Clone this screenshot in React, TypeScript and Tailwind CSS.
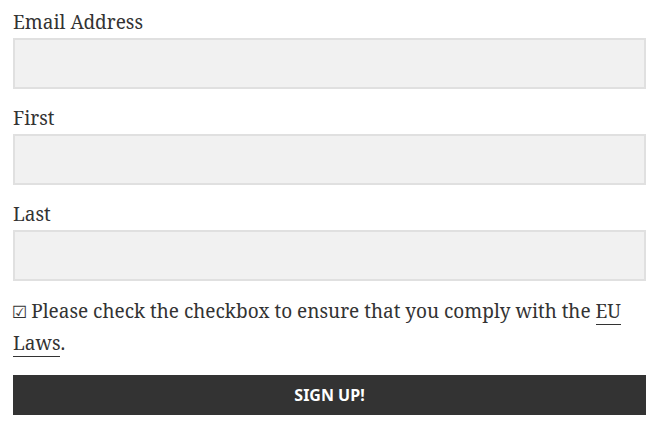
import React from 'react';

const serif = 'font-["Noto_Serif","DejaVu_Serif","Liberation_Serif",serif]';

const Field = ({ label, type = 'text' }: { label: string; type?: string }) => (
  <div>
    <label className="block text-[19px] leading-[28px] text-[#333] mb-[2px]">{label}</label>
    <input
      type={type}
      className="block w-full h-[51px] bg-[#f1f1f1] border-2 border-[#e0e0e0] outline-none px-2"
    />
  </div>
);

const App = () => {
  return (
    <div className={`bg-white w-[659px] h-[434px] px-[13px] pt-[8px] ${serif}`}>
      <div className="flex flex-col gap-[15px]">
        <Field label="Email Address" type="email" />
        <Field label="First" />
        <Field label="Last" />
      </div>
      <p className="mt-[14px] text-[19px] leading-[32px] text-[#333]">
        <span className='text-[17px] leading-none -ml-[1px] mr-[-1px] font-["DejaVu_Sans",sans-serif]'>☑</span> Please check the checkbox to ensure that you comply with the{' '}
        <a href="#" className="border-b border-[#333] text-[#333]">EU Laws</a>.
      </p>
      <button className='block w-full h-[40px] mt-[16px] bg-[#333] text-white text-[16px] font-bold uppercase font-["Noto_Sans","Open_Sans",sans-serif]'>
        Sign Up!
      </button>
    </div>
  );
};

export default App;
